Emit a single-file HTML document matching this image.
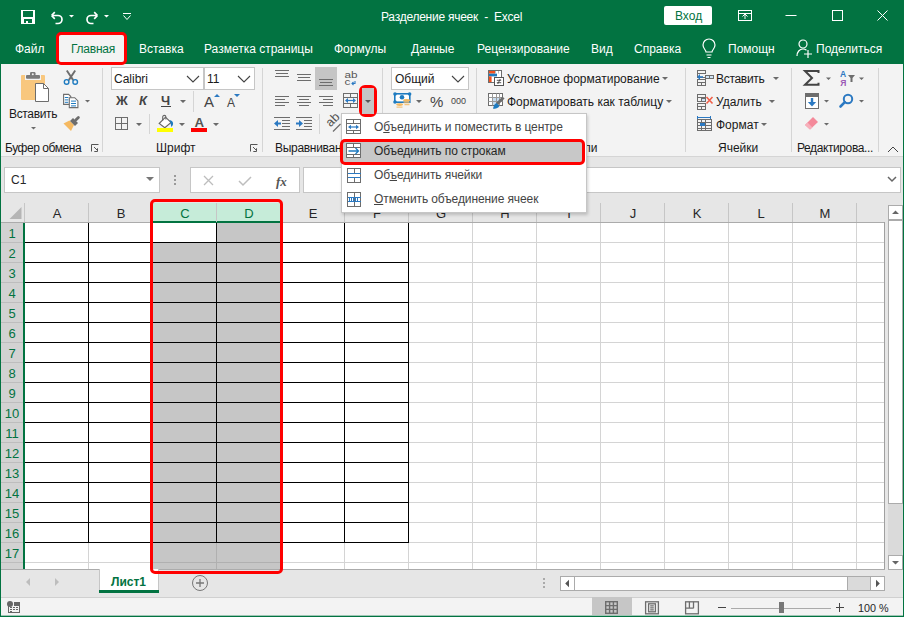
<!DOCTYPE html>
<html><head><meta charset="utf-8">
<style>
*{margin:0;padding:0;box-sizing:border-box}
html,body{width:904px;height:617px;overflow:hidden;background:#f3f3f3;font-family:"Liberation Sans",sans-serif;position:relative}
.a{position:absolute}
.t{position:absolute;white-space:nowrap;line-height:1}
.tab{color:#fff;font-size:12px;top:43px}
.sep{position:absolute;width:1px;background:#d5d5d5}
.lbl{position:absolute;white-space:nowrap;line-height:1;font-size:12px;color:#1a1a1a;top:142px}
.rt{position:absolute;white-space:nowrap;line-height:1;font-size:12px;color:#1a1a1a}
.arr{position:absolute;width:0;height:0;border-left:3px solid transparent;border-right:3px solid transparent;border-top:3px solid #6a6a6a}
.box{position:absolute;background:#fff;border:1px solid #c6c6c6}
.ch{position:absolute;top:204px;height:19px;font-size:13px;color:#262626;text-align:center;line-height:20px;width:64px}
.rh{position:absolute;left:1px;width:22px;font-size:13px;color:#027341;text-align:center;line-height:22px;height:20px}
.mi u{text-decoration-thickness:1px;text-underline-offset:1px}
.mi{position:absolute;left:374px;font-size:12px;color:#444;letter-spacing:-0.1px;white-space:nowrap;line-height:1}
</style></head><body>
<!-- title bar + tabs -->
<div class="a" style="left:0;top:0;width:904px;height:64px;background:#027341"></div>
<div class="t" style="left:381px;top:11px;color:#fff;font-size:12px;letter-spacing:-0.25px">Разделение ячеек&nbsp; - &nbsp;Excel</div>
<!-- quick access -->
<svg class="a" style="left:0;top:0" width="140" height="30">
 <g shape-rendering="crispEdges"><rect x="21" y="10" width="14" height="14" fill="#fff"/>
 <rect x="23" y="11" width="10" height="6" fill="#027341"/>
 <rect x="24" y="19" width="8" height="4" fill="#027341"/>
 <rect x="26" y="21" width="2" height="2" fill="#fff"/></g>
 <g fill="none" stroke="#fff" stroke-width="1.7">
  <path d="M51.5 15.5h6.5a4 4 0 0 1 0 8h-2.5M51.5 15.5l3.3-3.3M51.5 15.5l3.3 3.3"/>
  <path d="M97.5 15.5h-6.5a4 4 0 0 0 0 8h2.5M97.5 15.5l-3.3-3.3M97.5 15.5l-3.3 3.3"/>
 </g>
 <g fill="none" stroke="#fff" stroke-width="1"><path d="M123 13.5h8M123.5 15.5l3.5 4 3.5-4"/></g>
 <path d="M69 15h5l-2.5 2.5z M104 15h5l-2.5 2.5z" fill="#fff"/>
</svg>
<!-- Вход -->
<div class="a" style="left:664px;top:6px;width:48px;height:19px;background:#fff;border-radius:2px"></div>
<div class="t" style="left:675px;top:10px;color:#027341;font-size:12px">Вход</div>
<svg class="a" style="left:730px;top:0" width="174" height="32">
 <g fill="none" stroke="#fff" stroke-width="1">
  <rect x="8.5" y="10.5" width="13" height="10"/>
  <path d="M8.5 13.5h13M15 19v-5M12.5 16.5l2.5-2.5 2.5 2.5"/>
  <path d="M55.5 15.5h11"/>
  <rect x="102.5" y="10.5" width="10" height="10"/>
  <path d="M147.5 10.5l10 10M157.5 10.5l-10 10"/>
 </g>
</svg>

<!-- tabs -->
<div class="t tab" style="left:15px">Файл</div>
<div class="a" style="left:59px;top:35px;width:65px;height:29px;background:#f3f3f3"></div>
<div class="t tab" style="left:71px;color:#027341;letter-spacing:-0.25px">Главная</div>

<div class="t tab" style="left:139px">Вставка</div>
<div class="t tab" style="left:204px">Разметка страницы</div>
<div class="t tab" style="left:334px">Формулы</div>
<div class="t tab" style="left:411px">Данные</div>
<div class="t tab" style="left:477px">Рецензирование</div>
<div class="t tab" style="left:591px">Вид</div>
<div class="t tab" style="left:634px">Справка</div>
<svg class="a" style="left:700px;top:38px" width="20" height="22">
 <g fill="none" stroke="#fff" stroke-width="1.2">
  <path d="M6 14c0-2-3-3.5-3-7a6 6 0 0 1 12 0c0 3.5-3 5-3 7z M6.5 17h5 M7.5 19.5h3"/>
 </g>
</svg>
<div class="t tab" style="left:728px">Помощн</div>
<svg class="a" style="left:794px;top:38px" width="22" height="22">
 <g fill="none" stroke="#fff" stroke-width="1.2">
  <circle cx="9" cy="6" r="4"/>
  <path d="M3 18c0-4 2.5-7 6-7 1.5 0 2.5 0.4 3.5 1.2 M14 12v8 M10 16h8"/>
 </g>
</svg>
<div class="t tab" style="left:816px">Поделиться</div>

<!-- ribbon -->
<div class="a" style="left:0;top:64px;width:904px;height:93px;background:#f3f3f3"></div>
<div class="a" style="left:0;top:156px;width:904px;height:1px;background:#d5d5d5"></div>
<div class="sep" style="left:102px;top:68px;height:84px"></div>
<div class="sep" style="left:262px;top:68px;height:84px"></div>
<div class="sep" style="left:382px;top:68px;height:84px"></div>
<div class="sep" style="left:476px;top:68px;height:84px"></div>
<div class="sep" style="left:685px;top:68px;height:84px"></div>
<div class="sep" style="left:791px;top:68px;height:84px"></div>
<div class="sep" style="left:193px;top:91px;height:21px"></div>
<div class="sep" style="left:149px;top:114px;height:20px"></div>
<div class="sep" style="left:319px;top:114px;height:20px"></div>

<!-- clipboard group -->
<svg class="a" style="left:0;top:64px" width="102" height="93">
 <rect x="21" y="11" width="24" height="25" fill="#f8c77e" rx="1"/>
 <rect x="25" y="10" width="16" height="6" fill="#f3f3f3"/>
 <rect x="26" y="11" width="14" height="3.7" fill="#7a7a7a" rx="1"/>
 <rect x="30" y="8" width="5.5" height="4" fill="#7a7a7a" rx="1.2"/>
 <circle cx="32.8" cy="10.2" r="1" fill="#f3f3f3"/>
 <path d="M35.5 19.5h8l5 5v13h-13z" fill="#fff" stroke="#6d6d6d"/>
 <path d="M43.5 19.5v5h5" fill="none" stroke="#6d6d6d"/>
 <g fill="none" stroke="#6d6d6d" stroke-width="1.9"><path d="M66.8 6.5l6.4 9.6M75.2 6.5l-6.4 9.6"/></g>
 <g fill="none" stroke="#1e7bc0" stroke-width="1.4"><circle cx="66.6" cy="17.9" r="2.3"/><circle cx="75.2" cy="17.9" r="2.3"/></g>
 <g stroke="#6d6d6d" stroke-width="1.1" fill="#fff"><path d="M63.6 30.4h5l2.2 2.2v7.8h-7.2z"/><path d="M69.3 33.7h5.4l3.2 3.2v6.7h-8.6z"/></g>
 <g fill="#1e7bc0"><rect x="64.8" y="33" width="3.5" height="1"/><rect x="64.8" y="35.4" width="3.5" height="1"/><rect x="64.8" y="37.8" width="3.5" height="1"/>
 <rect x="71" y="36.6" width="5" height="1"/><rect x="71" y="39" width="5" height="1"/><rect x="71" y="41.4" width="5" height="1"/></g>
 <path d="M85 36h5l-2.5 2.5z" fill="#6a6a6a"/>
 <path d="M63.5 59.5l6-3 4.5 4.5-3 6z" fill="#f5b961"/>
 <path d="M70 57l3-3 5 5-3 3z" fill="#6d6d6d"/>
 <path d="M75.8 56l2.6-2.6" stroke="#6d6d6d" stroke-width="2.8" stroke-linecap="round"/>
 <path d="M31 63h5l-2.5 2.5z" fill="#6a6a6a"/>
 <g fill="none" stroke="#555"><path d="M91.5 87.5V80.5H98.5 M94 83l3.6 3.6 M97.5 84.3V87.5H94.3"/></g>
</svg>
<div class="rt" style="left:9px;top:108px;letter-spacing:-0.35px">Вставить</div>
<div class="lbl" style="left:5px;letter-spacing:-0.45px">Буфер обмена</div>

<!-- font group -->
<div class="box" style="left:111px;top:67px;width:93px;height:23px"></div>
<div class="box" style="left:204px;top:67px;width:51px;height:23px"></div>
<div class="rt" style="left:114px;top:73px;font-size:12px">Calibri</div>
<div class="rt" style="left:207px;top:73px;font-size:12px">11</div>
<svg class="a" style="left:100px;top:64px" width="164" height="93">
 <g fill="none" stroke="#444" stroke-width="1.1"><path d="M87 12l6 6 6-6 M138 12l6 6 6-6"/></g>
 <g font-family="Liberation Sans" fill="#444">
 <text x="16" y="41" font-size="13" font-weight="bold">Ж</text>
 <text x="39" y="41" font-size="13" font-weight="bold" font-style="italic">К</text>
 <text x="61" y="41" font-size="13" font-weight="bold">Ч</text>
 <text x="104" y="43" font-size="15">A</text>
 <text x="127" y="43" font-size="12">A</text>
 <text x="94.6" y="63.4" font-size="13.3" font-weight="bold" fill="#555">A</text>
 </g>
 <rect x="61" y="42" width="10" height="1" fill="#444"/>
 <path d="M80 36h6l-3 3z M36 59h6l-3 3z M79 59h6l-3 3z M113 59h6l-3 3z" fill="#6a6a6a"/>
 <path d="M114 33l3-3 3 3z M134 30l3 3 3-3z" fill="#2b79c2"/>
 <g fill="none" stroke="#6d6d6d"><rect x="15.5" y="53.5" width="12" height="12"/><path d="M21.5 53.5v12M15.5 59.5h12"/></g>
 <path d="M59.2 59.5l6.3-6.3 5.6 5.3-6.3 5.2z" fill="#fff" stroke="#666" stroke-width="1.1"/>
 <path d="M62.7 56.5V53a1.6 1.6 0 0 1 3.2 0v2.5" fill="none" stroke="#666" stroke-width="1.1"/>
 <path d="M69.5 56c2.3 0.2 3.6 1.8 3.6 3.5 0 1.4-0.8 2.5-1.8 3.6l-0.8-4z" fill="#1e7bc0"/>
 <rect x="57" y="64" width="16" height="4" fill="#ffff00"/>
 <rect x="91" y="64" width="16" height="4" fill="#ff0000"/>
 <g fill="none" stroke="#555"><path d="M150.5 87.5V80.5H157.5 M153 83l3.6 3.6 M156.5 84.3V87.5H153.3"/></g>
</svg>
<div class="lbl" style="left:156px">Шрифт</div>

<!-- alignment group -->
<svg class="a" style="left:262px;top:64px" width="122" height="93" shape-rendering="crispEdges">
 <rect x="53" y="3" width="22" height="23" fill="#c5c5c5"/>
 <g fill="#6d6d6d">
  <rect x="13" y="6" width="14" height="1"/><rect x="14" y="9" width="12" height="1"/><rect x="13" y="12" width="14" height="1"/>
  <rect x="35" y="10" width="14" height="1"/><rect x="36" y="13" width="12" height="1"/><rect x="35" y="16" width="14" height="1"/>
  <rect x="57" y="15" width="14" height="1"/><rect x="58" y="18" width="12" height="1"/><rect x="57" y="21" width="14" height="1"/>
  <rect x="13" y="32" width="14" height="1"/><rect x="13" y="35" width="10" height="1"/><rect x="13" y="38" width="14" height="1"/><rect x="13" y="41" width="10" height="1"/>
  <rect x="35" y="32" width="14" height="1"/><rect x="37" y="35" width="10" height="1"/><rect x="35" y="38" width="14" height="1"/><rect x="37" y="41" width="10" height="1"/>
  <rect x="57" y="32" width="14" height="1"/><rect x="61" y="35" width="10" height="1"/><rect x="57" y="38" width="14" height="1"/><rect x="61" y="41" width="10" height="1"/>
  <rect x="12" y="53" width="16" height="1"/><rect x="20" y="56" width="8" height="1"/><rect x="20" y="59" width="8" height="1"/><rect x="20" y="62" width="8" height="1"/><rect x="12" y="65" width="16" height="1"/>
  <rect x="34" y="53" width="16" height="1"/><rect x="42" y="56" width="8" height="1"/><rect x="42" y="59" width="8" height="1"/><rect x="42" y="62" width="8" height="1"/><rect x="34" y="65" width="16" height="1"/>
 </g>
 <g fill="none" stroke="#6d6d6d" stroke-width="1">
  <rect x="81.5" y="29.5" width="14" height="14"/>
  <path d="M81.5 33.5h14M81.5 39.5h14M88.5 29.5v4M88.5 39.5v4"/>
 </g>
</svg>
<svg class="a" style="left:262px;top:64px" width="122" height="93">
 <path d="M84.5 36.5h8" stroke="#2b79c2" stroke-width="1.2"/>
 <path d="M83 36.5l3-2.5v5z M94 36.5l-3-2.5v5z" fill="#2b79c2"/>
 <path d="M12 59.5l4-3.5v2.5h3v2h-3v2.5z M41 59.5l-4-3.5v2.5h-3v2h3v2.5z" fill="#2b79c2"/>
 <g font-family="Liberation Sans" fill="#555"><text transform="translate(82.5,13.6) scale(1.12,0.8)" font-size="10.5">ab</text><text transform="translate(82.5,21) scale(1.12,0.8)" font-size="10.5">c</text></g>
 <path d="M93 17v2.5h-3M91.5 18l-1.5 1.5 1.5 1.5" fill="none" stroke="#2b79c2" stroke-width="1.1"/>
 <g font-family="Liberation Sans" fill="#555" transform="translate(68.5,63.5) rotate(-45)"><text x="0" y="0" font-size="12.5">ab</text></g>
 <path d="M71 67.5l7.5-7.5" stroke="#6d6d6d" stroke-width="1.2"/>
</svg>
<div class="lbl" style="left:275px;letter-spacing:-0.3px">Выравнивание</div>

<!-- number group -->
<div class="box" style="left:391px;top:67px;width:78px;height:23px"></div>
<div class="rt" style="left:395px;top:73px">Общий</div>
<svg class="a" style="left:382px;top:64px" width="96" height="93">
 <g fill="none" stroke="#444" stroke-width="1.1"><path d="M70 12l6 6 6-6"/></g>
 <rect x="12.8" y="29.8" width="15" height="8.4" fill="#fff" stroke="#1e7bc0" stroke-width="1.6"/>
 <g fill="#1e7bc0"><circle cx="13" cy="30" r="1.8"/><circle cx="27.6" cy="30" r="1.8"/><circle cx="13" cy="38" r="1.8"/><circle cx="20" cy="33.2" r="2.3"/></g>
 <g fill="#f5b961"><ellipse cx="24.6" cy="36.4" rx="3.4" ry="1.3"/><rect x="21.5" y="38.3" width="6" height="1"/><rect x="22.5" y="40.2" width="5" height="1"/>
 <ellipse cx="17.6" cy="40.6" rx="3.4" ry="1.3"/><rect x="14.5" y="42.6" width="6" height="1"/></g>
 <path d="M34 36h6l-3 3z" fill="#6a6a6a"/>
 <g font-family="Liberation Sans" fill="#444"><text x="48" y="43" font-size="15">%</text><text x="69" y="40" font-size="9">000</text></g>
</svg>
<div class="lbl" style="left:411px">Число</div>

<!-- styles group -->
<svg class="a" style="left:486px;top:64px" width="20" height="50">
 <rect x="2.5" y="6.5" width="13" height="12" fill="#fff" stroke="#6d6d6d"/>
 <rect x="3" y="7" width="6" height="2.6" fill="#f4511e"/><rect x="3" y="9.6" width="8" height="2.8" fill="#1e7bc0"/><rect x="3" y="12.4" width="2.6" height="5.6" fill="#f4511e"/>
 <path d="M9.5 7v2.5M12.5 7v2.5" stroke="#bbb"/>
 <rect x="8.5" y="13.5" width="9" height="8" fill="#fff" stroke="#555"/>
 <path d="M10.8 16.3h4.4M10.8 18.7h4.4M14.3 15l-2.6 5" stroke="#444" fill="none" stroke-width=".9"/>
 <rect x="2.5" y="29.5" width="14" height="12" fill="#fff" stroke="#6d6d6d"/>
 <rect x="6" y="33" width="8" height="8" fill="#c5dcf0"/>
 <path d="M2.5 33.5h14M2.5 37.5h14M6.5 29.5v12M10.5 29.5v12M13.5 29.5v12" stroke="#9a9a9a" fill="none"/>
 <path d="M17.5 33.5l-6.5 6.5" stroke="#6d6d6d" stroke-width="3" fill="none"/>
 <path d="M10.5 39l3 3c-1.5 2.5-4 2.8-6.5 2.8 0.5-2.5 1-4.5 3.5-5.8z" fill="#1e7bc0"/>
</svg>
<div class="rt" style="left:507px;top:73px">Условное форматирование</div>
<div class="rt" style="left:507px;top:96px">Форматировать как таблицу</div>
<div class="arr" style="left:662px;top:77px"></div>
<div class="arr" style="left:666px;top:100px"></div>
<div class="lbl" style="left:563px">Стили</div>

<!-- cells group -->
<svg class="a" style="left:694px;top:64px" width="24" height="72" shape-rendering="crispEdges">
 <g fill="none" stroke="#6d6d6d">
  <rect x="3.5" y="6.5" width="8" height="3"/><path d="M3.5 9.5v4h8"/>
  <rect x="3.5" y="15.5" width="8" height="6"/><path d="M3.5 18.5h8M7.5 18.5v3"/>
 </g>
 <rect x="11.5" y="11.5" width="8" height="3" fill="#cfe3f5" stroke="#6d6d6d"/><path d="M15.5 11.5v3" stroke="#6d6d6d"/>
 <g fill="none" stroke="#6d6d6d">
  <rect x="3.5" y="30.5" width="8" height="3"/><path d="M3.5 33.5v4h4"/>
  <rect x="3.5" y="39.5" width="8" height="6"/><path d="M3.5 42.5h8M7.5 42.5v3"/>
 </g>
 <rect x="7.5" y="34.5" width="4" height="3" fill="#cfe3f5" stroke="#6d6d6d"/>
 <g fill="none" stroke="#6d6d6d">
  <rect x="3.5" y="55.5" width="14" height="11"/><path d="M3.5 58.5h14M3.5 61.5h14M3.5 64.5h14M7.5 55.5v11M11.5 55.5v11"/>
 </g>
 <rect x="6" y="59" width="5" height="3" fill="#2b79c2"/>
 <path d="M3 53.5h14" stroke="#2b79c2"/><path d="M3.5 52v3M16.5 52v3" stroke="#2b79c2"/>
</svg>
<svg class="a" style="left:694px;top:64px" width="24" height="72">
 <path d="M4 13h5" stroke="#2b79c2" stroke-width="1.6"/><path d="M3 13l3-3v6z" fill="#2b79c2"/>
 <path d="M12.5 33l6 6.5M18.5 33l-6 6.5" stroke="#f0604a" stroke-width="1.6"/>
</svg>
<div class="rt" style="left:716px;top:73px;letter-spacing:-0.3px">Вставить</div>
<div class="rt" style="left:716px;top:96px">Удалить</div>
<div class="rt" style="left:716px;top:119px">Формат</div>
<div class="arr" style="left:773px;top:77px"></div>
<div class="arr" style="left:769px;top:100px"></div>
<div class="arr" style="left:761px;top:123px"></div>
<div class="lbl" style="left:718px">Ячейки</div>

<!-- editing group -->
<svg class="a" style="left:792px;top:64px" width="112" height="93">
 <path d="M26.5 9V7H13L20 14l-7 6.8h13.5v-2" fill="none" stroke="#444" stroke-width="2"/>
 <path d="M34 13.5h5l-2.5 2.5z M67 13.5h5l-2.5 2.5z M32 36h5l-2.5 2.5z M67 36h5l-2.5 2.5z M32 59h5l-2.5 2.5z" fill="#6a6a6a"/>
 <rect x="13.5" y="29.5" width="13" height="15" fill="#fff" stroke="#6d6d6d"/>
 <rect x="13" y="29" width="14" height="4" fill="#6d6d6d"/>
 <path d="M20 34v6" stroke="#2b79c2" stroke-width="2.4"/><path d="M15.8 38l4.2 4.4 4.2-4.4z" fill="#2b79c2"/>
 <path d="M13 61L21 53l5 5-8 7.5z" fill="#f4899a"/><path d="M13 61l2.5-2.5 5 5L18 65.5z" fill="#f7b0bb"/>
 <g font-family="Liberation Sans" font-size="8.5" font-weight="bold"><text x="48" y="12.6" fill="#2b79c2">A</text><text x="48.3" y="21.6" fill="#9b59b6">Я</text></g>
 <path d="M56 11h7l-2.5 3v4h-2v-4z" fill="#6d6d6d"/>
 <circle cx="56" cy="35" r="4.2" fill="none" stroke="#2b79c2" stroke-width="2"/>
 <path d="M52.8 38.2l-4.3 4.3" stroke="#2b79c2" stroke-width="2.6" stroke-linecap="round"/>
 <path d="M96 88l5-5 5 5" fill="none" stroke="#444"/>
</svg>
<div class="lbl" style="left:797px;letter-spacing:-0.4px">Редактирова...</div>
<div class="sep" style="left:878px;top:68px;height:84px"></div>

<!-- formula bar area -->
<div class="a" style="left:0;top:157px;width:904px;height:46px;background:#e6e6e6"></div>
<div class="box" style="left:4px;top:167px;width:156px;height:26px"></div>
<div class="t" style="left:11px;top:174px;font-size:12px;color:#262626">C1</div>
<div class="arr" style="left:146px;top:177px;border-left-width:4px;border-right-width:4px;border-top-width:4px;border-top-color:#777"></div>
<svg class="a" style="left:172px;top:174px" width="6" height="12"><g fill="#999"><rect x="2" y="1" width="2" height="2"/><rect x="2" y="5" width="2" height="2"/><rect x="2" y="9" width="2" height="2"/></g></svg>
<div class="box" style="left:190px;top:167px;width:110px;height:26px"></div>
<svg class="a" style="left:190px;top:167px" width="110" height="26">
 <path d="M14 9l9 9M23 9l-9 9" stroke="#bdbdbd" stroke-width="1.3"/>
 <path d="M49 14l4 4 8-8" fill="none" stroke="#bdbdbd" stroke-width="1.5"/>
 <text x="86" y="19" font-family="Liberation Serif" font-style="italic" font-weight="bold" font-size="13" fill="#555">fx</text>
</svg>
<div class="box" style="left:303px;top:167px;width:598px;height:26px"></div>
<svg class="a" style="left:887px;top:176px" width="10" height="7"><path d="M1 1l4 4 4-4" fill="none" stroke="#666" stroke-width="1.5"/></svg>

<!-- column headers -->
<div class="a" style="left:0;top:203px;width:885px;height:20px;background:#e6e6e6"></div>
<div class="a" style="left:0;top:222px;width:885px;height:1px;background:#ababab"></div>
<svg class="a" style="left:0;top:203px" width="25" height="20"><path d="M9.5 16h12v-12z" fill="#b5b5b5"/><rect x="24" y="0" width="1" height="19" fill="#c6c6c6"/></svg>
<div class="a" style="left:152px;top:203px;width:128px;height:19px;background:#c6ecd9"></div>
<div class="a" style="left:152px;top:221px;width:128px;height:2px;background:#027341"></div>
<svg class="a" style="left:0;top:0" width="904" height="617" shape-rendering="crispEdges">
<rect x="24" y="223" width="860" height="346" fill="#fff"/>
<rect x="152" y="223" width="128" height="346" fill="#c6c6c6"/>
<rect x="153" y="223" width="63" height="19" fill="#fff"/>
<rect x="88" y="223" width="1" height="346" fill="#d4d4d4"/>
<rect x="152" y="223" width="1" height="346" fill="#d4d4d4"/>
<rect x="216" y="223" width="1" height="346" fill="#d4d4d4"/>
<rect x="280" y="223" width="1" height="346" fill="#d4d4d4"/>
<rect x="344" y="223" width="1" height="346" fill="#d4d4d4"/>
<rect x="408" y="223" width="1" height="346" fill="#d4d4d4"/>
<rect x="472" y="223" width="1" height="346" fill="#d4d4d4"/>
<rect x="536" y="223" width="1" height="346" fill="#d4d4d4"/>
<rect x="600" y="223" width="1" height="346" fill="#d4d4d4"/>
<rect x="664" y="223" width="1" height="346" fill="#d4d4d4"/>
<rect x="728" y="223" width="1" height="346" fill="#d4d4d4"/>
<rect x="792" y="223" width="1" height="346" fill="#d4d4d4"/>
<rect x="856" y="223" width="1" height="346" fill="#d4d4d4"/>
<rect x="24" y="242" width="860" height="1" fill="#d4d4d4"/>
<rect x="24" y="262" width="860" height="1" fill="#d4d4d4"/>
<rect x="24" y="282" width="860" height="1" fill="#d4d4d4"/>
<rect x="24" y="302" width="860" height="1" fill="#d4d4d4"/>
<rect x="24" y="322" width="860" height="1" fill="#d4d4d4"/>
<rect x="24" y="342" width="860" height="1" fill="#d4d4d4"/>
<rect x="24" y="362" width="860" height="1" fill="#d4d4d4"/>
<rect x="24" y="382" width="860" height="1" fill="#d4d4d4"/>
<rect x="24" y="402" width="860" height="1" fill="#d4d4d4"/>
<rect x="24" y="422" width="860" height="1" fill="#d4d4d4"/>
<rect x="24" y="442" width="860" height="1" fill="#d4d4d4"/>
<rect x="24" y="462" width="860" height="1" fill="#d4d4d4"/>
<rect x="24" y="482" width="860" height="1" fill="#d4d4d4"/>
<rect x="24" y="502" width="860" height="1" fill="#d4d4d4"/>
<rect x="24" y="522" width="860" height="1" fill="#d4d4d4"/>
<rect x="24" y="542" width="860" height="1" fill="#d4d4d4"/>
<rect x="24" y="562" width="860" height="1" fill="#d4d4d4"/>
<rect x="152" y="242" width="128" height="1" fill="#b0b0b0"/>
<rect x="152" y="262" width="128" height="1" fill="#b0b0b0"/>
<rect x="152" y="282" width="128" height="1" fill="#b0b0b0"/>
<rect x="152" y="302" width="128" height="1" fill="#b0b0b0"/>
<rect x="152" y="322" width="128" height="1" fill="#b0b0b0"/>
<rect x="152" y="342" width="128" height="1" fill="#b0b0b0"/>
<rect x="152" y="362" width="128" height="1" fill="#b0b0b0"/>
<rect x="152" y="382" width="128" height="1" fill="#b0b0b0"/>
<rect x="152" y="402" width="128" height="1" fill="#b0b0b0"/>
<rect x="152" y="422" width="128" height="1" fill="#b0b0b0"/>
<rect x="152" y="442" width="128" height="1" fill="#b0b0b0"/>
<rect x="152" y="462" width="128" height="1" fill="#b0b0b0"/>
<rect x="152" y="482" width="128" height="1" fill="#b0b0b0"/>
<rect x="152" y="502" width="128" height="1" fill="#b0b0b0"/>
<rect x="152" y="522" width="128" height="1" fill="#b0b0b0"/>
<rect x="152" y="542" width="128" height="1" fill="#b0b0b0"/>
<rect x="152" y="562" width="128" height="1" fill="#b0b0b0"/>
<rect x="216" y="223" width="1" height="346" fill="#b0b0b0"/>
<rect x="24" y="223" width="1" height="320" fill="#000"/>
<rect x="88" y="223" width="1" height="320" fill="#000"/>
<rect x="152" y="223" width="1" height="320" fill="#000"/>
<rect x="216" y="223" width="1" height="320" fill="#000"/>
<rect x="280" y="223" width="1" height="320" fill="#000"/>
<rect x="344" y="223" width="1" height="320" fill="#000"/>
<rect x="408" y="223" width="1" height="320" fill="#000"/>
<rect x="24" y="242" width="385" height="1" fill="#000"/>
<rect x="24" y="262" width="385" height="1" fill="#000"/>
<rect x="24" y="282" width="385" height="1" fill="#000"/>
<rect x="24" y="302" width="385" height="1" fill="#000"/>
<rect x="24" y="322" width="385" height="1" fill="#000"/>
<rect x="24" y="342" width="385" height="1" fill="#000"/>
<rect x="24" y="362" width="385" height="1" fill="#000"/>
<rect x="24" y="382" width="385" height="1" fill="#000"/>
<rect x="24" y="402" width="385" height="1" fill="#000"/>
<rect x="24" y="422" width="385" height="1" fill="#000"/>
<rect x="24" y="442" width="385" height="1" fill="#000"/>
<rect x="24" y="462" width="385" height="1" fill="#000"/>
<rect x="24" y="482" width="385" height="1" fill="#000"/>
<rect x="24" y="502" width="385" height="1" fill="#000"/>
<rect x="24" y="522" width="385" height="1" fill="#000"/>
<rect x="24" y="542" width="385" height="1" fill="#000"/>
</svg>
<div class="ch" style="left:25px;color:#262626">A</div>
<div class="a" style="left:88px;top:203px;width:1px;height:19px;background:#c6c6c6"></div>
<div class="ch" style="left:89px;color:#262626">B</div>
<div class="a" style="left:152px;top:203px;width:1px;height:19px;background:#c6c6c6"></div>
<div class="ch" style="left:153px;color:#027341">C</div>
<div class="a" style="left:216px;top:203px;width:1px;height:19px;background:#c6c6c6"></div>
<div class="ch" style="left:217px;color:#027341">D</div>
<div class="a" style="left:280px;top:203px;width:1px;height:19px;background:#c6c6c6"></div>
<div class="ch" style="left:281px;color:#262626">E</div>
<div class="a" style="left:344px;top:203px;width:1px;height:19px;background:#c6c6c6"></div>
<div class="ch" style="left:345px;color:#262626">F</div>
<div class="a" style="left:408px;top:203px;width:1px;height:19px;background:#c6c6c6"></div>
<div class="ch" style="left:409px;color:#262626">G</div>
<div class="a" style="left:472px;top:203px;width:1px;height:19px;background:#c6c6c6"></div>
<div class="ch" style="left:473px;color:#262626">H</div>
<div class="a" style="left:536px;top:203px;width:1px;height:19px;background:#c6c6c6"></div>
<div class="ch" style="left:537px;color:#262626">I</div>
<div class="a" style="left:600px;top:203px;width:1px;height:19px;background:#c6c6c6"></div>
<div class="ch" style="left:601px;color:#262626">J</div>
<div class="a" style="left:664px;top:203px;width:1px;height:19px;background:#c6c6c6"></div>
<div class="ch" style="left:665px;color:#262626">K</div>
<div class="a" style="left:728px;top:203px;width:1px;height:19px;background:#c6c6c6"></div>
<div class="ch" style="left:729px;color:#262626">L</div>
<div class="a" style="left:792px;top:203px;width:1px;height:19px;background:#c6c6c6"></div>
<div class="ch" style="left:793px;color:#262626">M</div>
<div class="a" style="left:856px;top:203px;width:1px;height:19px;background:#c6c6c6"></div>
<div class="a" style="left:0;top:223px;width:24px;height:346px;background:#d2d2d2"></div>
<div class="rh" style="top:223px">1</div>
<div class="a" style="left:0;top:242px;width:23px;height:1px;background:#bdbdbd"></div>
<div class="rh" style="top:243px">2</div>
<div class="a" style="left:0;top:262px;width:23px;height:1px;background:#bdbdbd"></div>
<div class="rh" style="top:263px">3</div>
<div class="a" style="left:0;top:282px;width:23px;height:1px;background:#bdbdbd"></div>
<div class="rh" style="top:283px">4</div>
<div class="a" style="left:0;top:302px;width:23px;height:1px;background:#bdbdbd"></div>
<div class="rh" style="top:303px">5</div>
<div class="a" style="left:0;top:322px;width:23px;height:1px;background:#bdbdbd"></div>
<div class="rh" style="top:323px">6</div>
<div class="a" style="left:0;top:342px;width:23px;height:1px;background:#bdbdbd"></div>
<div class="rh" style="top:343px">7</div>
<div class="a" style="left:0;top:362px;width:23px;height:1px;background:#bdbdbd"></div>
<div class="rh" style="top:363px">8</div>
<div class="a" style="left:0;top:382px;width:23px;height:1px;background:#bdbdbd"></div>
<div class="rh" style="top:383px">9</div>
<div class="a" style="left:0;top:402px;width:23px;height:1px;background:#bdbdbd"></div>
<div class="rh" style="top:403px">10</div>
<div class="a" style="left:0;top:422px;width:23px;height:1px;background:#bdbdbd"></div>
<div class="rh" style="top:423px">11</div>
<div class="a" style="left:0;top:442px;width:23px;height:1px;background:#bdbdbd"></div>
<div class="rh" style="top:443px">12</div>
<div class="a" style="left:0;top:462px;width:23px;height:1px;background:#bdbdbd"></div>
<div class="rh" style="top:463px">13</div>
<div class="a" style="left:0;top:482px;width:23px;height:1px;background:#bdbdbd"></div>
<div class="rh" style="top:483px">14</div>
<div class="a" style="left:0;top:502px;width:23px;height:1px;background:#bdbdbd"></div>
<div class="rh" style="top:503px">15</div>
<div class="a" style="left:0;top:522px;width:23px;height:1px;background:#bdbdbd"></div>
<div class="rh" style="top:523px">16</div>
<div class="a" style="left:0;top:542px;width:23px;height:1px;background:#bdbdbd"></div>
<div class="rh" style="top:543px">17</div>
<div class="a" style="left:0;top:562px;width:23px;height:1px;background:#bdbdbd"></div>
<div class="a" style="left:23px;top:223px;width:2px;height:346px;background:#027341"></div>

<!-- red selection box -->

<!-- grid right/bottom edges -->
<div class="a" style="left:884px;top:222px;width:1px;height:348px;background:#a0a0a0"></div>
<div class="a" style="left:0;top:569px;width:885px;height:1px;background:#ababab"></div>
<!-- vertical scrollbar -->
<div class="a" style="left:885px;top:203px;width:19px;height:367px;background:#e6e6e6"></div>
<div class="a" style="left:888px;top:205px;width:15px;height:364px;background:#dadada"></div>
<div class="box" style="left:888px;top:205px;width:15px;height:15px;border-color:#ababab"></div>
<div class="box" style="left:888px;top:220px;width:15px;height:284px;border-color:#ababab"></div>
<div class="box" style="left:888px;top:555px;width:15px;height:15px;border-color:#ababab"></div>
<svg class="a" style="left:888px;top:205px" width="15" height="364"><path d="M4 9l3.5-3.5 3.5 3.5z M4 356l3.5 3.5 3.5-3.5z" fill="#666"/></svg>
<!-- sheet tabs bar -->
<div class="a" style="left:0;top:570px;width:904px;height:27px;background:#e6e6e6"></div>
<svg class="a" style="left:0;top:570px" width="230" height="27"><path d="M30 8l-4 4 4 4z M55 8l4 4-4 4z" fill="#bdbdbd"/>
<circle cx="200" cy="13" r="7.5" fill="none" stroke="#777"/><path d="M196 13h8M200 9v8" stroke="#777" stroke-width="1.3"/></svg>
<div class="a" style="left:99px;top:569px;width:60px;height:24px;background:#fff;border-left:1px solid #c6c6c6;border-right:1px solid #c6c6c6"></div>
<div class="a" style="left:99px;top:590px;width:60px;height:3px;background:#027341"></div>
<div class="t" style="left:111px;top:576px;font-size:12px;font-weight:bold;color:#027341">Лист1</div>
<svg class="a" style="left:538px;top:570px" width="10" height="27"><g fill="#aaa"><rect x="5" y="8" width="2" height="2"/><rect x="5" y="12" width="2" height="2"/><rect x="5" y="16" width="2" height="2"/></g></svg>
<div class="box" style="left:560px;top:576px;width:325px;height:15px;background:#dadada;border-color:#ababab"></div>
<div class="box" style="left:560px;top:576px;width:15px;height:15px;border-color:#ababab"></div>
<div class="box" style="left:574px;top:576px;width:274px;height:15px;border-color:#ababab"></div>
<div class="box" style="left:870px;top:576px;width:15px;height:15px;border-color:#ababab"></div>
<svg class="a" style="left:560px;top:576px" width="325" height="15"><path d="M9 3.8l-3.8 3.7 3.8 3.7z M316 3.8l3.8 3.7-3.8 3.7z" fill="#555"/></svg>
<!-- status bar -->
<div class="a" style="left:0;top:597px;width:904px;height:20px;background:#f3f3f3"></div>
<div class="a" style="left:0;top:597px;width:904px;height:1px;background:#d0d0d0"></div>
<svg class="a" style="left:0;top:597px" width="904" height="20" shape-rendering="crispEdges">
 <g fill="#666"><rect x="14" y="5" width="6" height="4"/><rect x="8" y="15" width="12" height="1"/><rect x="8" y="9" width="1" height="7"/><rect x="19" y="5" width="1" height="11"/>
 <rect x="10" y="10" width="2" height="1"/><rect x="13" y="10" width="2" height="1"/><rect x="16" y="10" width="2" height="1"/>
 <rect x="10" y="12" width="2" height="1"/><rect x="13" y="12" width="2" height="1"/><rect x="16" y="12" width="2" height="1"/>
 <rect x="10" y="14" width="2" height="0.6"/></g>
 <circle cx="10" cy="7" r="3" fill="#666" shape-rendering="auto"/>
 <rect x="592" y="0" width="40" height="18" fill="#c6c6c6"/>
 <g fill="none" stroke="#6d6d6d" stroke-width="1.4" shape-rendering="auto"><rect x="605.7" y="4.7" width="11.6" height="11.6"/><path d="M609.6 4.7v11.6M613.4 4.7v11.6M605.7 8.6h11.6M605.7 12.4h11.6"/></g>
 <g fill="none" stroke="#6d6d6d" stroke-width="1.3" shape-rendering="auto"><rect x="645.6" y="4.8" width="12.8" height="12"/><rect x="648.6" y="6.8" width="6.8" height="8"/><path d="M650.2 8.8h3.6M650.2 10.8h3.6M650.2 12.8h3.6"/>
 <rect x="685.6" y="4.8" width="12.8" height="12"/><path d="M685.6 11.2h8M689.4 4.8v6.4M693.5 4.8v6.4"/></g>
 <rect x="718" y="10" width="8" height="1" fill="#444"/>
 <rect x="836" y="10" width="8" height="1" fill="#444"/><rect x="839" y="6" width="1" height="9" fill="#444"/>
 <rect x="731" y="11" width="100" height="1" fill="#aaa"/>
 <rect x="779" y="5" width="5" height="11" fill="#777"/>
</svg>
<div class="t" style="left:858px;top:603px;font-size:10.8px;color:#262626">100 %</div>

<!-- merge dropdown menu -->
<div class="a" style="left:341px;top:113px;width:246px;height:100px;background:#fff;border:1px solid #c6c6c6;box-shadow:1px 2px 3px rgba(0,0,0,.18)"></div>
<div class="a" style="left:342px;top:141px;width:241px;height:22px;background:#c8c8c8"></div>
<div class="a" style="left:340px;top:139px;width:245px;height:26px;border:3px solid #ff0000;border-radius:5px"></div>
<svg class="a" style="left:341px;top:113px" width="30" height="99" shape-rendering="crispEdges">
 <g fill="#fff" stroke="#6d6d6d">
  <rect x="5.5" y="6.5" width="14" height="14"/><path d="M5.5 10.5h14M5.5 17.5h14M12.5 6.5v4M12.5 17.5v3"/>
  <rect x="5.5" y="30.5" width="14" height="14"/><path d="M5.5 34.5h14M5.5 41.5h14M12.5 30.5v4M12.5 41.5v3"/>
  <rect x="6.5" y="55.5" width="13" height="14"/><path d="M13.5 55.5v14"/>
  <rect x="6.5" y="79.5" width="13" height="14"/><path d="M13.5 79.5v14"/>
 </g>
 <g fill="none" stroke="#2b79c2">
  <path d="M6.5 60.5h13M6.5 64.5h13"/><rect x="7" y="61" width="12" height="3" fill="#fff" stroke="none"/>
  <path d="M6.5 84.5h13M6.5 88.5h13"/>
 </g>
 <g fill="#2b79c2"><rect x="8" y="85" width="1" height="3"/><rect x="10" y="85" width="1" height="3"/><rect x="12" y="85" width="1" height="3"/><rect x="14" y="85" width="1" height="3"/><rect x="16" y="85" width="1" height="3"/></g>
</svg>
<svg class="a" style="left:341px;top:113px" width="30" height="99">
 <path d="M8.5 14h8" stroke="#2b79c2" stroke-width="1.2"/>
 <path d="M7 14l3-2.3v4.6z M18 14l-3-2.3v4.6z" fill="#2b79c2"/>
 <path d="M7.5 38h10M14.5 35l3 3-3 3" fill="none" stroke="#1e7bc0" stroke-width="1.3"/>
</svg>
<div class="mi" style="top:121px">О<u>б</u>ъединить и поместить в центре</div>
<div class="mi" style="top:145px;color:#262626">Объе<u>д</u>инить по строкам</div>
<div class="mi" style="top:169px">Об<u>ъ</u>единить ячейки</div>
<div class="mi" style="top:193px"><u>О</u>тменить объединение ячеек</div>

<div class="a" style="left:359px;top:85px;width:18px;height:32px;border:3px solid #ff0000;border-radius:6px"></div>
<div class="a" style="left:362px;top:88px;width:12px;height:26px;background:#c5c5c5"></div>
<div class="arr" style="left:365px;top:100px;border-top-color:#555"></div>
<div class="a" style="left:150px;top:199px;width:133px;height:375px;border:3px solid #ff0000;border-radius:5px"></div>
<div class="a" style="left:56px;top:32px;width:71px;height:33px;border:3px solid #ff0000;border-radius:5px"></div>
<!-- window borders -->
<div class="a" style="left:0;top:64px;width:1px;height:553px;background:#027341"></div>
<div class="a" style="left:903px;top:64px;width:1px;height:553px;background:#027341"></div>
<div class="a" style="left:0;top:616px;width:904px;height:1px;background:#027341"></div><div class="a" style="left:0;top:615px;width:904px;height:1px;background:#027341;opacity:.35"></div>
</body></html>
